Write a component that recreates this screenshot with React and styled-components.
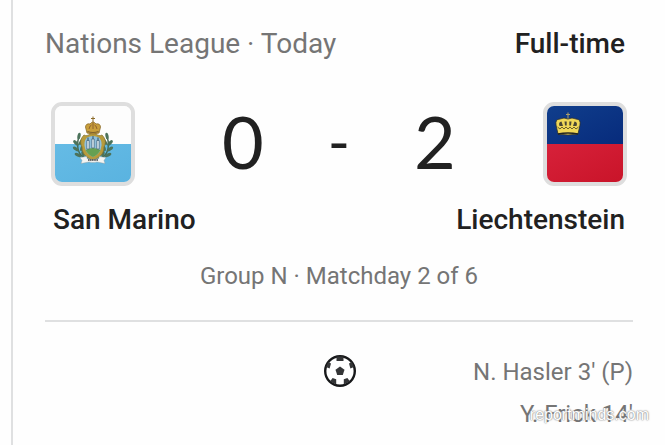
import React from "react";
import styled, { createGlobalStyle } from "styled-components";

const scorers = ["N. Hasler 3' (P)", "Y. Frick 14'"];

function SanMarinoFlag() {
  return (
    <svg viewBox="0 0 76 76" role="img" aria-label="San Marino">
      <defs>
        <linearGradient id="smBlue" x1="0" y1="0" x2="1" y2="1">
          <stop offset="0" stopColor="#65bbe5" />
          <stop offset="1" stopColor="#5ab3e0" />
        </linearGradient>
      </defs>
      <rect width="76" height="38" fill="#fdfdfd" />
      <rect y="38" width="76" height="38" fill="url(#smBlue)" />
      {/* laurel and oak branches */}
      <g fill="none" stroke="#3f6650" strokeWidth="1.4">
        <path d="M35 54C25 52 20 44 24 30" />
        <path d="M41 54C51 52 56 44 52 30" />
      </g>
      <g fill="#4c735b">
        <ellipse cx="24" cy="30" rx="1.6" ry="3.4" transform="rotate(10 24 30)" />
        <ellipse cx="21" cy="37" rx="1.6" ry="3.6" transform="rotate(-45 21 37)" />
        <ellipse cx="26" cy="36" rx="1.6" ry="3.2" transform="rotate(30 26 36)" />
        <ellipse cx="21" cy="43" rx="1.6" ry="3.6" transform="rotate(-55 21 43)" />
        <ellipse cx="27" cy="42" rx="1.6" ry="3.2" transform="rotate(20 27 42)" />
        <ellipse cx="23" cy="49" rx="1.6" ry="3.6" transform="rotate(-65 23 49)" />
        <ellipse cx="28" cy="48" rx="1.6" ry="3.2" transform="rotate(-10 28 48)" />
        <ellipse cx="52" cy="30" rx="1.6" ry="3.4" transform="rotate(-10 52 30)" />
        <ellipse cx="55" cy="37" rx="1.6" ry="3.6" transform="rotate(45 55 37)" />
        <ellipse cx="50" cy="36" rx="1.6" ry="3.2" transform="rotate(-30 50 36)" />
        <ellipse cx="55" cy="43" rx="1.6" ry="3.6" transform="rotate(55 55 43)" />
        <ellipse cx="49" cy="42" rx="1.6" ry="3.2" transform="rotate(-20 49 42)" />
        <ellipse cx="53" cy="49" rx="1.6" ry="3.6" transform="rotate(65 53 49)" />
        <ellipse cx="48" cy="48" rx="1.6" ry="3.2" transform="rotate(10 48 48)" />
      </g>
      {/* shield with the three towers */}
      <path
        d="M29 29C33 31 35 27 38 27S43 31 47 29C51 33 51 37 49 41C49 49 44 51 38 55C32 51 27 49 27 41C25 37 25 33 29 29Z"
        fill="#b79b3c"
        stroke="#80702f"
        strokeWidth="0.7"
      />
      <path
        d="M32 31.5Q38 28.5 44 31.5Q48 36 46 42Q45 48 38 51Q31 48 30 42Q28 36 32 31.5Z"
        fill="#8fc0dc"
      />
      <path d="M30.5 44Q38 40 45.5 44Q43 49 38 51Q33 49 30.5 44Z" fill="#66a052" />
      <g fill="#dbe7ee" stroke="#3f6178" strokeWidth="0.7">
        <path d="M31.8 34.5h2.4v8.5h-2.4zM36.8 33h2.4v9h-2.4zM41.8 34.5h2.4V43h-2.4z" />
      </g>
      <path d="M33 31.5v3M38 30v3M43 31.5v3" stroke="#3f6178" strokeWidth="1.2" />
      {/* ribbon */}
      <path
        d="M25 51.5l7-1v2q6 2 12 0v-2l7 1-2 3 1 3-8-1.5q-4 1-8 0l-8 1.5 1-3z"
        fill="#f4f5f2"
        stroke="#8b9698"
        strokeWidth="0.4"
      />
      <path d="M33 54h10" stroke="#444" strokeWidth="1.6" strokeDasharray="1.4 0.4" />
      {/* crown */}
      <path
        d="M32 27L30.5 21Q31 17 35 18Q38 14 41 18Q45 17 45.5 21L44 27Q38 29 32 27Z"
        fill="#c99f3b"
        stroke="#8d6c2b"
        strokeWidth="0.8"
      />
      <path
        d="M34 23q1-4 2.5-4M42 23q-1-4-2.5-4M38 17v6"
        fill="none"
        stroke="#8a5b2c"
        strokeWidth="0.9"
      />
      <path d="M32.5 25.5q5.5 2 11 0" fill="none" stroke="#7d622f" strokeWidth="1.1" />
      <path d="M38 10.5v6M36 12.5h4" stroke="#8d6c2b" strokeWidth="1" />
    </svg>
  );
}

function LiechtensteinFlag() {
  return (
    <svg viewBox="0 0 76 76" role="img" aria-label="Liechtenstein">
      <defs>
        <linearGradient id="liBlue" x1="0" y1="0" x2="1" y2="1">
          <stop offset="0" stopColor="#103e8c" />
          <stop offset="1" stopColor="#072b7c" />
        </linearGradient>
        <linearGradient id="liRed" x1="0" y1="0" x2="1" y2="1">
          <stop offset="0" stopColor="#d7213a" />
          <stop offset="1" stopColor="#c91429" />
        </linearGradient>
      </defs>
      <rect width="76" height="38" fill="url(#liBlue)" />
      <rect y="38" width="76" height="38" fill="url(#liRed)" />
      <path
        d="M11 28L9 19Q8 13 13 13Q17 11 21 13Q25 11 29 13Q34 13 33 19L31 28Q21 30 11 28Z"
        fill="#f0d758"
        stroke="#2a2d30"
        strokeWidth="0.8"
      />
      {/* openings between the arches */}
      <path
        d="M12.5 20q-1.5-4 2-4.500l1.500 4.500zM29.500 20q1.500-4-2-4.500l-1.500 4.500zM18 19.500l-.5-4h2.200v4zM24 19.500l.5-4h-2.200v4z"
        fill="#4a4634"
      />
      <path
        d="M10.500 21l2.500 2 2-2 2 2 2-2 2 2 2-2 2 2 2-2 2 2 2.500-2"
        fill="none"
        stroke="#5c5128"
        strokeWidth="0.9"
      />
      <path d="M11 28Q21 26 31 28" fill="none" stroke="#23241f" strokeWidth="1.5" />
      <path d="M21 6.500v6M19 8.500h4" stroke="#a99d68" strokeWidth="1.1" />
    </svg>
  );
}

function BallIcon() {
  return (
    <svg width="34" height="34" viewBox="0 0 34 34" role="img" aria-label="Goals">
      <circle cx="18" cy="17" r="14.8" fill="#fff" stroke="#17181a" strokeWidth="2.4" />
      <g fill="#343537">
        <path d="M18 12.500l4.500 3.200-1.700 5.400h-5.600l-1.700-5.400z" />
        <path d="M14.500 2.500h7v4.500h-7z" />
        <path d="M4 13l3.600 1.600L9 9.500 6.200 8zM32 13l-3.600 1.600L27 9.500 29.800 8z" />
        <path d="M8 27.500l2.600-3.500 3.600 1.200v5.300zM28 27.500L25.400 24l-3.600 1.200v5.300z" />
      </g>
    </svg>
  );
}

function App() {
  return (
    <>
      <GlobalStyle />
      <Card>
        <Header>
          <Competition>Nations League · Today</Competition>
          <Status>Full-time</Status>
        </Header>
        <Scoreboard>
          <Flag>
            <SanMarinoFlag />
          </Flag>
          <Score>
            <Digit>0</Digit>
            <Dash>-</Dash>
            <Digit>2</Digit>
          </Score>
          <Flag>
            <LiechtensteinFlag />
          </Flag>
        </Scoreboard>
        <Teams>
          <Team>San Marino</Team>
          <Team>Liechtenstein</Team>
        </Teams>
        <Stage>Group N · Matchday 2 of 6</Stage>
        <Goals>
          <span />
          <BallIcon />
          <ScorerList>
            {scorers.map((scorer) => (
              <Scorer key={scorer}>{scorer}</Scorer>
            ))}
          </ScorerList>
          <Watermark>reportminds.com</Watermark>
        </Goals>
      </Card>
    </>
  );
}

const GlobalStyle = createGlobalStyle`
  * {
    box-sizing: border-box;
  }

  body {
    margin: 0;
    background-color: #fefefe;
    color: #212121;
    font-family: Roboto, sans-serif;
  }
`;

const Card = styled.main`
  min-height: 100vh;
  margin-left: 11px;
  padding: 24px 32px 0;
  border-left: 2px solid #dfe0e1;
`;

const Header = styled.header`
  display: flex;
  justify-content: space-between;
  padding-right: 8px;
  font-size: 28px;
  line-height: 40px;
`;

const Competition = styled.span`
  color: #757575;
`;

const Status = styled.span`
  font-weight: 500;
`;

const Scoreboard = styled.section`
  display: flex;
  justify-content: space-between;
  align-items: flex-start;
  margin-top: 38px;
  padding: 0 6px;
`;

const Flag = styled.div`
  width: 84px;
  height: 84px;
  border: 4px solid #dedede;
  border-radius: 11px;
  overflow: hidden;

  svg {
    display: block;
  }
`;

const Score = styled.div`
  display: grid;
  grid-template-columns: repeat(3, 96px);
  text-align: center;
`;

const Digit = styled.span`
  font-family: Lato, sans-serif;
  font-size: 72px;
  line-height: 78px;
`;

const Dash = styled(Digit)`
  font-size: 60px;
`;

const Teams = styled.div`
  display: flex;
  justify-content: space-between;
  margin-top: 14px;
  padding: 0 8px;
`;

const Team = styled.span`
  font-size: 28px;
  font-weight: 500;
  line-height: 40px;
`;

const Stage = styled.p`
  margin: 16px 0 0;
  padding-bottom: 24px;
  border-bottom: 2px solid #dfe0e1;
  color: #757575;
  font-size: 24px;
  line-height: 40px;
  text-align: center;
`;

const Goals = styled.section`
  position: relative;
  display: grid;
  grid-template-columns: 1fr auto 1fr;
  align-items: start;
  padding-top: 29px;

  svg {
    margin-top: 3px;
  }
`;

const ScorerList = styled.ul`
  margin: 0;
  padding: 0;
  list-style: none;
  color: #757575;
  font-size: 24px;
  text-align: right;
`;

const Scorer = styled.li`
  line-height: 42px;
`;

const Watermark = styled.span`
  position: absolute;
  right: -16px;
  bottom: 10px;
  color: #fff;
  font-family: "Liberation Sans", Arial, sans-serif;
  font-size: 16px;
  line-height: 20px;
  text-shadow: 0 0 2px #777, 0 0 1px #999;
`;

export default App;
